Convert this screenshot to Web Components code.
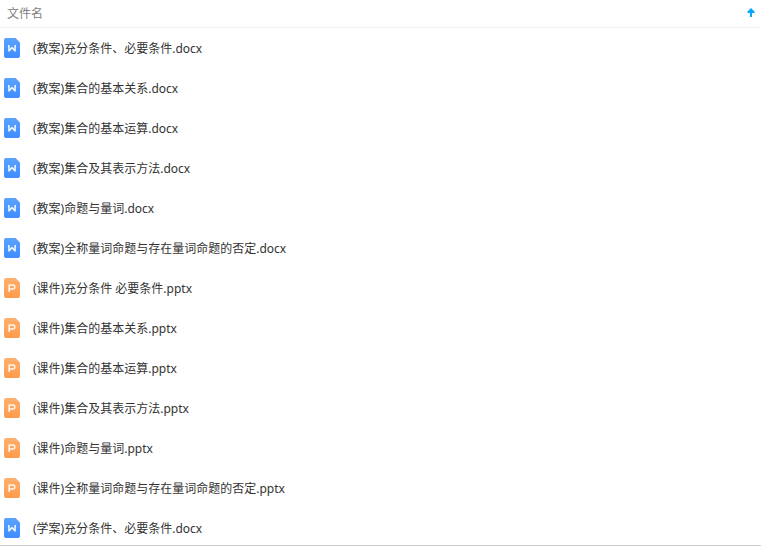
<!DOCTYPE html>
<html lang="zh-CN">
<head>
<meta charset="utf-8">
<meta name="viewport" content="width=device-width, initial-scale=1">
<title>文件名</title>
<style>
  body {
    margin: 0;
    background: #fff;
    color: #333;
    font: 12px/16px "Noto Sans", "Noto Sans CJK SC", sans-serif;
  }
</style>
</head>
<body>
<file-list>
  <list-header slot="header">文件名</list-header>
  <file-row type="docx">(教案)充分条件、必要条件.docx</file-row>
  <file-row type="docx">(教案)集合的基本关系.docx</file-row>
  <file-row type="docx">(教案)集合的基本运算.docx</file-row>
  <file-row type="docx">(教案)集合及其表示方法.docx</file-row>
  <file-row type="docx">(教案)命题与量词.docx</file-row>
  <file-row type="docx">(教案)全称量词命题与存在量词命题的否定.docx</file-row>
  <file-row type="pptx">(课件)充分条件 必要条件.pptx</file-row>
  <file-row type="pptx">(课件)集合的基本关系.pptx</file-row>
  <file-row type="pptx">(课件)集合的基本运算.pptx</file-row>
  <file-row type="pptx">(课件)集合及其表示方法.pptx</file-row>
  <file-row type="pptx">(课件)命题与量词.pptx</file-row>
  <file-row type="pptx">(课件)全称量词命题与存在量词命题的否定.pptx</file-row>
  <file-row type="docx">(学案)充分条件、必要条件.docx</file-row>
</file-list>

<script>
class FileList extends HTMLElement {
  constructor() {
    super();
    this.attachShadow({mode: 'open'});
  }

  connectedCallback() {
    this.shadowRoot.innerHTML = `
    <style>
    :host {
      display: flex;
      flex-direction: column;
      box-sizing: border-box;
      height: 100vh;
      border-bottom: 1px solid #ccc;
    }

    .rows {
      flex: 1;
      min-height: 0;
      overflow: hidden;
    }
    </style>

    <slot name="header"></slot>
    <div class="rows" role="list"><slot></slot></div>`;
  }
}

class ListHeader extends HTMLElement {
  constructor() {
    super();
    this.attachShadow({mode: 'open'});
  }

  connectedCallback() {
    this.shadowRoot.innerHTML = `
    <style>
    :host {
      display: flex;
      align-items: center;
      justify-content: space-between;
      padding: 4px 5px 3px 7px;
      border-bottom: 1px solid #f2f2f2;
      color: #808080;
    }

    button {
      display: flex;
      padding: 2px 0 6px;
      border: 0;
      background: none;
      cursor: pointer;
    }

    svg {
      width: 10px;
      height: 12px;
    }
    </style>

    <span><slot></slot></span>
    <button type="button" aria-label="升序">
      <svg viewBox="0 0 10 12"><path fill="#06a7ff" d="M5 2 8.500 5.500V7H6v4H4V7H1.500V5.500z"/></svg>
    </button>`;
  }
}

const icons = {
  docx: {
    from: '#5ba2ff',
    to: '#3d8cff',
    glyph: '<path d="M4.800 7 5 13 8 9.500 11 13 11.200 7"/>'
  },
  pptx: {
    from: '#ffb06e',
    to: '#ff9a4d',
    glyph: '<path d="M5.200 14V7H9a1.800 2 0 0 1 0 4H5.200"/>'
  }
};

class FileRow extends HTMLElement {
  constructor() {
    super();
    this.attachShadow({mode: 'open'});
  }

  connectedCallback() {
    const icon = icons[this.getAttribute('type')];
    this.setAttribute('role', 'listitem');
    this.shadowRoot.innerHTML = `
    <style>
    :host {
      display: flex;
      align-items: center;
      gap: 13px;
      height: 40px;
      padding: 0 4px;
    }

    svg {
      flex: none;
      width: 16px;
      height: 20px;
    }

    a {
      padding-top: 2px;
      overflow: hidden;
      color: inherit;
      text-decoration: none;
      text-overflow: ellipsis;
      white-space: nowrap;
    }
    </style>

    <svg viewBox="0 0 16 20" aria-hidden="true">
      <defs>
        <linearGradient id="fill" x2="0" y2="1">
          <stop stop-color="${icon.from}"/>
          <stop offset="1" stop-color="${icon.to}"/>
        </linearGradient>
      </defs>
      <path fill="url(#fill)" d="M2 0h9.500L16 4.500V18a2 2 0 0 1-2 2H2a2 2 0 0 1-2-2V2a2 2 0 0 1 2-2z"/>
      <g fill="none" stroke="#fff" stroke-opacity=".9" stroke-width="1.600" stroke-linejoin="round">${icon.glyph}</g>
    </svg>
    <a href="#"><slot></slot></a>`;
  }
}

customElements.define('file-list', FileList);
customElements.define('list-header', ListHeader);
customElements.define('file-row', FileRow);
</script>
</body>
</html>
